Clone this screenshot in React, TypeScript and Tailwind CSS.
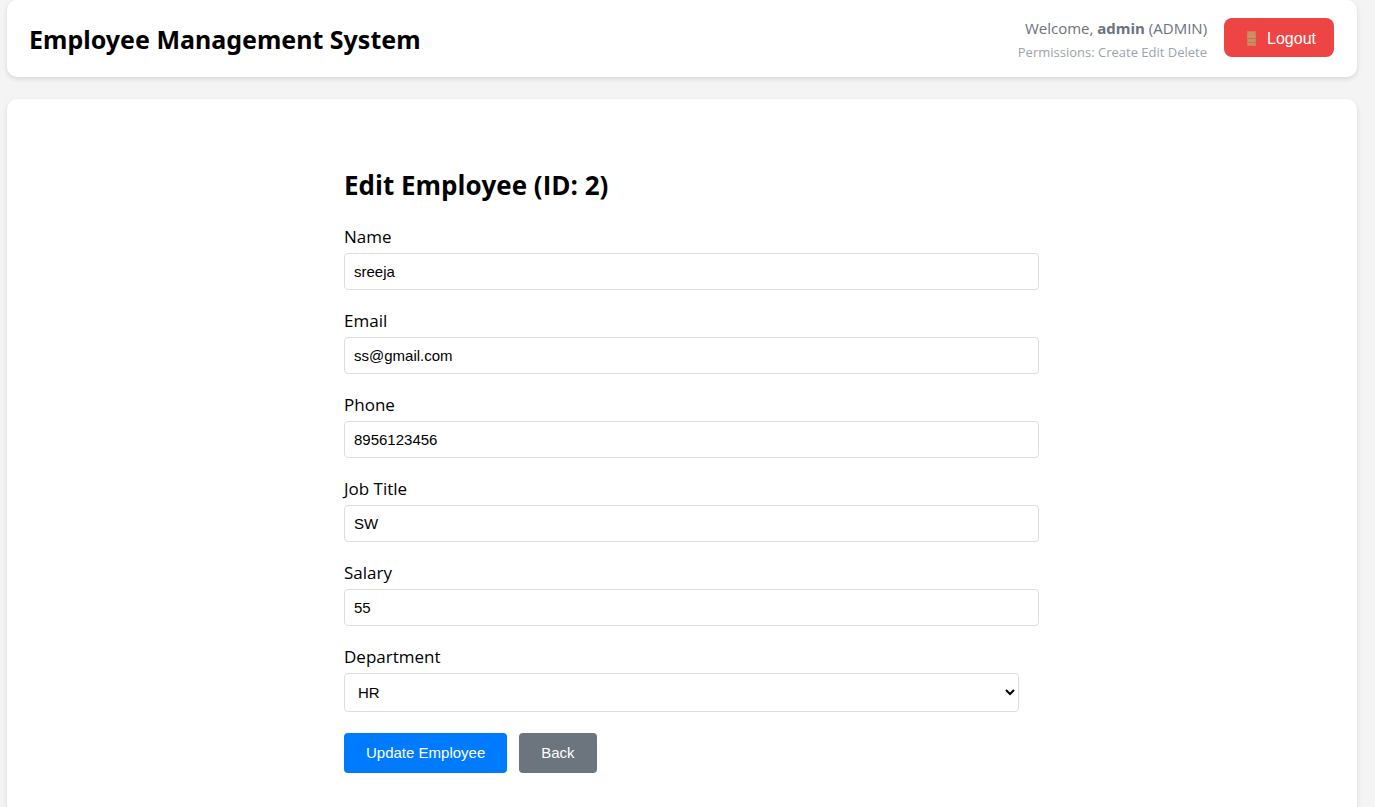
import { useState } from "react";

type Field = { id: string; label: string; value: string; type: string };

const initialFields: Field[] = [
  { id: "name", label: "Name", value: "sreeja", type: "text" },
  { id: "email", label: "Email", value: "ss@gmail.com", type: "email" },
  { id: "phone", label: "Phone", value: "8956123456", type: "tel" },
  { id: "jobTitle", label: "Job Title", value: "SW", type: "text" },
  { id: "salary", label: "Salary", value: "55", type: "text" },
];

function DoorIcon() {
  return (
    <svg className="h-4 w-[22px]" viewBox="0 0 22 16" aria-hidden="true">
      <rect x="6" y="0" width="9" height="15" fill="#c87f52" />
      <rect x="7" y="1" width="7" height="13" fill="#cb8d66" />
      <path d="M7 5.5h7M7 7.5h7M7 11.5h7" stroke="#b8704a" strokeWidth="0.7" />
      <path d="M6 5.5h9" stroke="#dc9a50" strokeWidth="0.8" />
    </svg>
  );
}

function Header() {
  return (
    <header className="flex h-[77px] items-center justify-between rounded-[10px] bg-white pr-[23px] pl-[22px] shadow-[0_2px_5px_rgba(0,0,0,0.12)]">
      <h1 className="font-['Noto_Sans','Open_Sans',sans-serif] text-[25px] leading-9 font-bold">
        Employee Management System
      </h1>
      <div className="flex items-center gap-[17px]">
        <div className="pt-0.5 text-right">
          <p className="text-[15px] leading-6 text-[#6b7280]">
            Welcome, <strong className="font-bold">admin</strong> (ADMIN)
          </p>
          <p className="text-[13px] leading-6 text-[#9ca3af]">Permissions: Create Edit Delete</p>
        </div>
        <button
          type="button"
          className="mb-0.5 flex h-[39px] items-center gap-1 rounded-lg bg-[#ef4444] pt-0.5 pr-[18px] pl-[17px] font-['Liberation_Sans',Arial,sans-serif] text-base text-white"
        >
          <DoorIcon />
          Logout
        </button>
      </div>
    </header>
  );
}

function EditForm() {
  const [fields, setFields] = useState(initialFields);
  const [department, setDepartment] = useState("HR");

  const update = (id: string, value: string) =>
    setFields((all) => all.map((f) => (f.id === id ? { ...f, value } : f)));

  return (
    <form className="mx-auto w-full max-w-[695px]" onSubmit={(e) => e.preventDefault()}>
      <h2 className="mb-[21px] text-[26px] leading-9 font-bold">Edit Employee (ID: 2)</h2>
      <div className="flex flex-col gap-[18px]">
        {fields.map((f) => (
          <div key={f.id} className="flex flex-col gap-1">
            <label htmlFor={f.id} className="text-[17px] leading-[25px]">
              {f.label}
            </label>
            <input
              id={f.id}
              type={f.type}
              value={f.value}
              onChange={(e) => update(f.id, e.target.value)}
              className="h-[37px] w-full rounded border border-[#ddd] bg-white px-[9px] font-['Liberation_Sans',Arial,sans-serif] text-[15px]"
            />
          </div>
        ))}
        <div className="flex flex-col gap-1">
          <label htmlFor="department" className="text-[17px] leading-[25px]">
            Department
          </label>
          <select
            id="department"
            value={department}
            onChange={(e) => setDepartment(e.target.value)}
            className="mr-5 h-[39px] rounded border border-[#ddd] bg-white pr-0 pl-[9px] font-['Liberation_Sans',Arial,sans-serif] text-[15px]"
          >
            <option>HR</option>
          </select>
        </div>
      </div>
      <div className="mt-[21px] flex gap-3 font-['Liberation_Sans',Arial,sans-serif] text-[15px] text-white">
        <button type="submit" className="h-10 rounded bg-[#007bff] px-[22px]">
          Update Employee
        </button>
        <button type="button" className="h-10 rounded bg-[#6c757d] px-[22px]">
          Back
        </button>
      </div>
    </form>
  );
}

export default function App() {
  return (
    <div className="min-h-screen bg-[#f4f4f4] pr-[18px] pl-[7px] font-['Open_Sans','Noto_Sans',sans-serif] text-black">
      <Header />
      <main className="mt-[22px] min-h-[calc(100vh-99px)] rounded-t-[10px] bg-white pt-[68px] pr-[23px] pb-[34px] pl-[42px] shadow-[0_2px_5px_rgba(0,0,0,0.12)]">
        <EditForm />
      </main>
    </div>
  );
}
